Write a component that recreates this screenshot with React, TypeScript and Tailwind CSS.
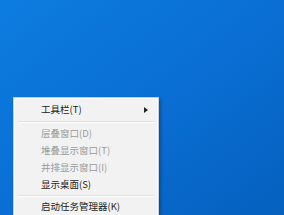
export default function App() {
  const items: { label: string; disabled?: boolean; sub?: boolean; sep?: string }[] = [
    { label: "工具栏(T)", sub: true },
    { label: "", sep: "h-[7px]" },
    { label: "层叠窗口(D)", disabled: true },
    { label: "堆叠显示窗口(T)", disabled: true },
    { label: "并排显示窗口(I)", disabled: true },
    { label: "显示桌面(S)" },
    { label: "", sep: "h-[5px]" },
    { label: "启动任务管理器(K)" },
  ]
  return (
    <div className="w-[284px] h-[215px] overflow-hidden bg-gradient-to-br from-[#0d7ce0] via-[#0a6fd4] to-[#0560be] pl-[13px] pt-[97px]">
      <div className="w-[146px] border border-[#c9cdd2] bg-[#f2f2f2] shadow-[2px_2px_3px_rgba(0,0,0,0.25)]">
        <div className="border border-white pt-[2px] pb-2 font-['Noto_Sans_CJK_SC','Noto_Sans',sans-serif] text-[9.5px]">
          {items.map((it, i) =>
            it.sep ? (
              <div key={i} className={`${it.sep} flex items-center pl-[3px] pr-[3px]`}>
                <div className="w-full border-t border-[#e0e0e0] border-b-white border-b" />
              </div>
            ) : (
              <div
                key={i}
                className={`h-[17px] leading-[17px] pl-[26px] pr-[8px] flex items-center justify-between ${
                  it.disabled ? "text-[#9b9b9b]" : "text-[#1b1b1b]"
                }`}
              >
                <span>{it.label}</span>
                {it.sub && (
                  <svg width="4" height="6" viewBox="0 0 4 6" className="mr-[1px]">
                    <path d="M0 0 L4 3 L0 6 Z" fill="#222" />
                  </svg>
                )}
              </div>
            )
          )}
        </div>
      </div>
    </div>
  )
}
